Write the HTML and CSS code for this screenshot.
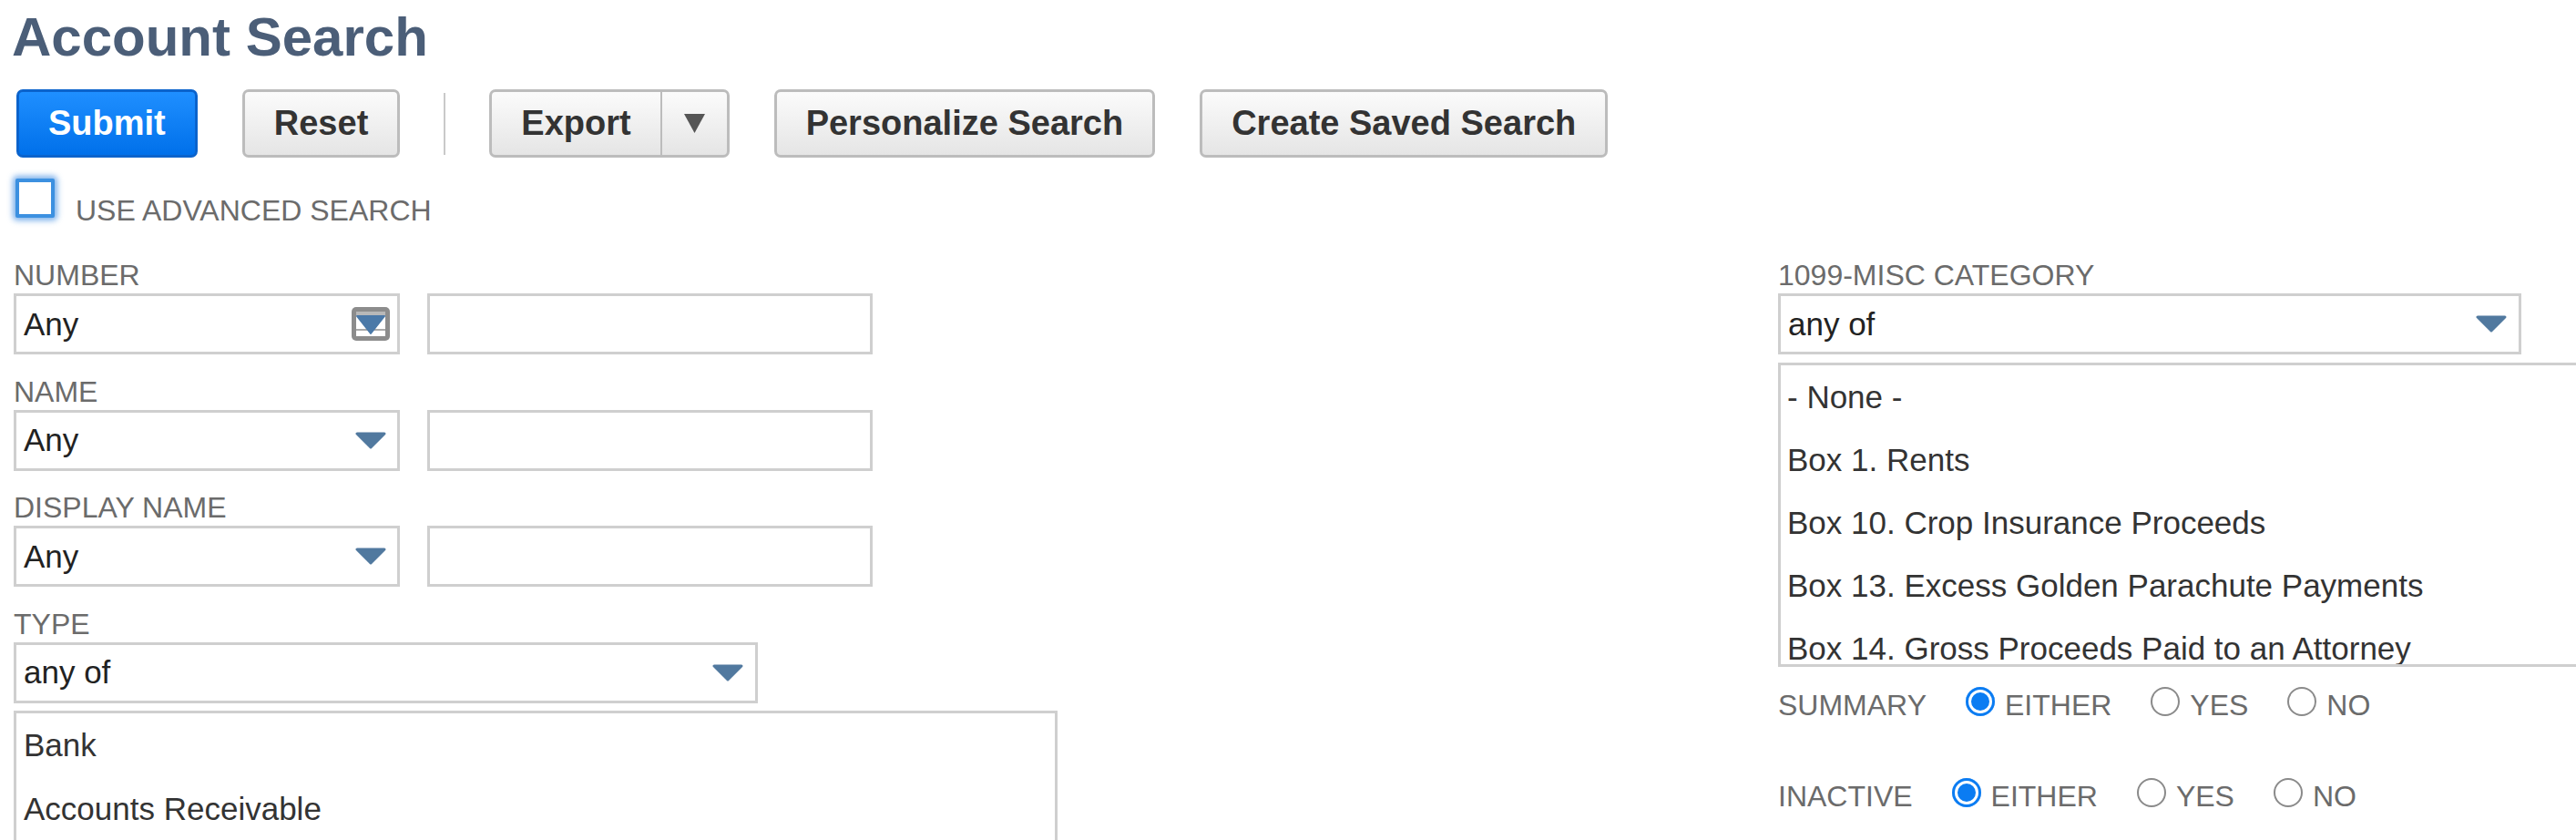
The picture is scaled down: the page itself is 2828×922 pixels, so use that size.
FILE: index.html
```html
<!DOCTYPE html>
<html lang="en">
<head>
<meta charset="utf-8">
<title>Account Search</title>
<link rel="stylesheet" href="styles.css">
</head>
<body>
<div class="page">
  <h1 class="title">Account Search</h1>

  <div class="toolbar">
    <div class="btn btn-primary">Submit</div>
    <div class="btn">Reset</div>
    <span class="sep"></span>
    <div class="btn-split">
      <div class="split-main">Export</div>
      <div class="split-arrow">
        <svg width="23" height="21" viewBox="0 0 23 21"><polygon points="0,0 23,0 11.5,21" fill="#555"/></svg>
      </div>
    </div>
    <div class="btn">Personalize Search</div>
    <div class="btn">Create Saved Search</div>
  </div>

  <div class="adv">
    <span class="checkbox"></span>
    <span class="adv-text">USE ADVANCED SEARCH</span>
  </div>

  <div class="form">
    <div class="col col-left">
      <div class="field">
        <div class="label">NUMBER</div>
        <div class="row">
          <div class="select sel-sm">
            <span>Any</span>
            <svg class="icon-box" width="42" height="37" viewBox="0 0 42 37">
              <rect x="0" y="0" width="42" height="37" rx="5" fill="#8c8c8c"/>
              <rect x="5" y="5" width="32" height="27" fill="#ffffff"/>
              <rect x="5" y="5" width="32" height="5" fill="#b8b8b8"/>
              <rect x="5" y="24" width="32" height="2" fill="#a9a9a9"/>
              <polygon points="6,10 36,10 21,29" fill="#4b79a8" stroke="#4b79a8" stroke-width="2" stroke-linejoin="round"/>
            </svg>
          </div>
          <div class="input"></div>
        </div>
      </div>

      <div class="field">
        <div class="label">NAME</div>
        <div class="row">
          <div class="select sel-sm">
            <span>Any</span>
            <svg class="arrow" width="34" height="19" viewBox="0 0 34 19"><polygon points="2,2 32,2 17,17" fill="#51799f" stroke="#51799f" stroke-width="3" stroke-linejoin="round"/></svg>
          </div>
          <div class="input"></div>
        </div>
      </div>

      <div class="field">
        <div class="label">DISPLAY NAME</div>
        <div class="row">
          <div class="select sel-sm">
            <span>Any</span>
            <svg class="arrow" width="34" height="19" viewBox="0 0 34 19"><polygon points="2,2 32,2 17,17" fill="#51799f" stroke="#51799f" stroke-width="3" stroke-linejoin="round"/></svg>
          </div>
          <div class="input"></div>
        </div>
      </div>

      <div class="field">
        <div class="label">TYPE</div>
        <div class="select sel-wide">
          <span>any of</span>
          <svg class="arrow" width="34" height="19" viewBox="0 0 34 19"><polygon points="2,2 32,2 17,17" fill="#51799f" stroke="#51799f" stroke-width="3" stroke-linejoin="round"/></svg>
        </div>
        <div class="list list-left">
          <div class="item">Bank</div>
          <div class="item">Accounts Receivable</div>
        </div>
      </div>
    </div>

    <div class="col col-right">
      <div class="label">1099-MISC CATEGORY</div>
      <div class="select sel-right">
        <span>any of</span>
        <svg class="arrow" width="34" height="19" viewBox="0 0 34 19"><polygon points="2,2 32,2 17,17" fill="#51799f" stroke="#51799f" stroke-width="3" stroke-linejoin="round"/></svg>
      </div>
      <div class="list list-right">
        <div class="item item-r">- None -</div>
        <div class="item item-r">Box 1. Rents</div>
        <div class="item item-r">Box 10. Crop Insurance Proceeds</div>
        <div class="item item-r">Box 13. Excess Golden Parachute Payments</div>
        <div class="item item-r">Box 14. Gross Proceeds Paid to an Attorney</div>
      </div>

      <div class="radio-row first">
        <span class="radio-label">SUMMARY</span>
        <span class="opt"><span class="radio checked"></span>EITHER</span>
        <span class="opt"><span class="radio"></span>YES</span>
        <span class="opt"><span class="radio"></span>NO</span>
      </div>
      <div class="radio-row second">
        <span class="radio-label">INACTIVE</span>
        <span class="opt"><span class="radio checked"></span>EITHER</span>
        <span class="opt"><span class="radio"></span>YES</span>
        <span class="opt"><span class="radio"></span>NO</span>
      </div>
    </div>
  </div>
</div>
</body>
</html>
```

FILE: styles.css
```css
html, body {
  margin: 0;
  padding: 0;
  background: #ffffff;
  overflow: hidden;
}

body {
  font-family: "Liberation Sans", Arial, Helvetica, sans-serif;
  color: #333333;
}

.page {
  padding-left: 15px;
  width: 2813px;
  height: 922px;
  overflow: hidden;
}

.title {
  font-size: 60px;
  line-height: 70px;
  font-weight: bold;
  color: #4b5e78;
  margin: 6px 0 0 -2px;
}

/* toolbar */
.toolbar {
  display: flex;
  align-items: center;
  gap: 49px;
  margin-top: 22px;
  padding-left: 3px;
  height: 75px;
}

.btn {
  height: 75px;
  box-sizing: border-box;
  padding: 0 32px;
  border: 3px solid #bcbcbc;
  border-radius: 7px;
  background: linear-gradient(#fbfbfb, #e5e5e5);
  font-size: 38px;
  font-weight: bold;
  color: #333333;
  display: flex;
  align-items: center;
  white-space: nowrap;
}

.btn-primary {
  background: linear-gradient(#1f8fff, #0070ea);
  border-color: #0b63cc;
  color: #ffffff;
}

.sep {
  width: 2px;
  height: 68px;
  background: #c9c9c9;
  margin: 0 -1px;
}

.btn-split {
  display: flex;
  height: 75px;
  box-sizing: border-box;
  border: 3px solid #bcbcbc;
  border-radius: 7px;
  background: linear-gradient(#fbfbfb, #e5e5e5);
}

.split-main {
  padding: 0 32px;
  display: flex;
  align-items: center;
  font-size: 38px;
  font-weight: bold;
  color: #333333;
  border-right: 2px solid #bcbcbc;
}

.split-arrow {
  width: 71px;
  display: flex;
  align-items: center;
  justify-content: center;
}

/* advanced search checkbox */
.adv {
  display: flex;
  align-items: flex-end;
  margin-top: 23px;
  margin-left: 2px;
}

.checkbox {
  width: 43px;
  height: 43px;
  box-sizing: border-box;
  border: 4px solid #3c90e0;
  border-radius: 2px;
  background: #ffffff;
  box-shadow: 0 0 6px 3px rgba(55, 135, 225, 0.65);
  margin-bottom: 10px;
  margin-right: 23px;
}

.adv-text {
  font-size: 32px;
  line-height: 36px;
  color: #6b6b6b;
}

/* form */
.form {
  display: flex;
  margin-top: 35px;
}

.col-left {
  width: 1937px;
  flex: none;
}

.col-right {
  flex: 1;
  min-width: 0;
}

.field + .field {
  margin-top: 22.5px;
}

.label {
  font-size: 32px;
  line-height: 36px;
  color: #6b6b6b;
  margin-bottom: 2px;
  white-space: nowrap;
}

.row {
  display: flex;
}

.select,
.input {
  height: 67px;
  box-sizing: border-box;
  border: 3px solid #cfcfcf;
  background: #ffffff;
}

.select {
  display: flex;
  align-items: center;
  justify-content: space-between;
  padding: 0 13px 0 8px;
  font-size: 35px;
  color: #222222;
}

.sel-sm {
  width: 424px;
  padding-right: 12px;
}

.icon-box {
  margin-right: -4px;
}

.input {
  width: 489px;
  margin-left: 30px;
}

.sel-wide {
  width: 817px;
}

.sel-right {
  width: 816px;
}

.list {
  border: 3px solid #cfcfcf;
  box-sizing: border-box;
  overflow: hidden;
  background: #ffffff;
}

.list-left {
  width: 1146px;
  height: 150px;
  margin-top: 8px;
}

.list-right {
  width: 900px;
  height: 334px;
  margin-top: 9px;
  border-right: none;
}

.item {
  font-size: 35px;
  line-height: 70px;
  color: #333333;
  padding-left: 8px;
  white-space: nowrap;
}

.item-r {
  line-height: 69px;
  padding-left: 7px;
}

/* radio rows */
.radio-row {
  display: flex;
  align-items: center;
  height: 36px;
  font-size: 32px;
  line-height: 36px;
  color: #6b6b6b;
}

.radio-row.first {
  margin-top: 24px;
}

.radio-row.second {
  margin-top: 64px;
}

.radio-label {
  margin-right: 43px;
}

.opt {
  display: flex;
  align-items: center;
  margin-right: 43px;
}

.radio {
  width: 32px;
  height: 32px;
  box-sizing: border-box;
  border-radius: 50%;
  border: 2px solid #8a8a8a;
  background: #ffffff;
  margin-right: 11px;
  margin-bottom: 8px;
}

.radio.checked {
  border: none;
  background: #0b7cf2;
  box-shadow: inset 0 0 0 3px #0b7cf2, inset 0 0 0 6px #ffffff;
}
```
